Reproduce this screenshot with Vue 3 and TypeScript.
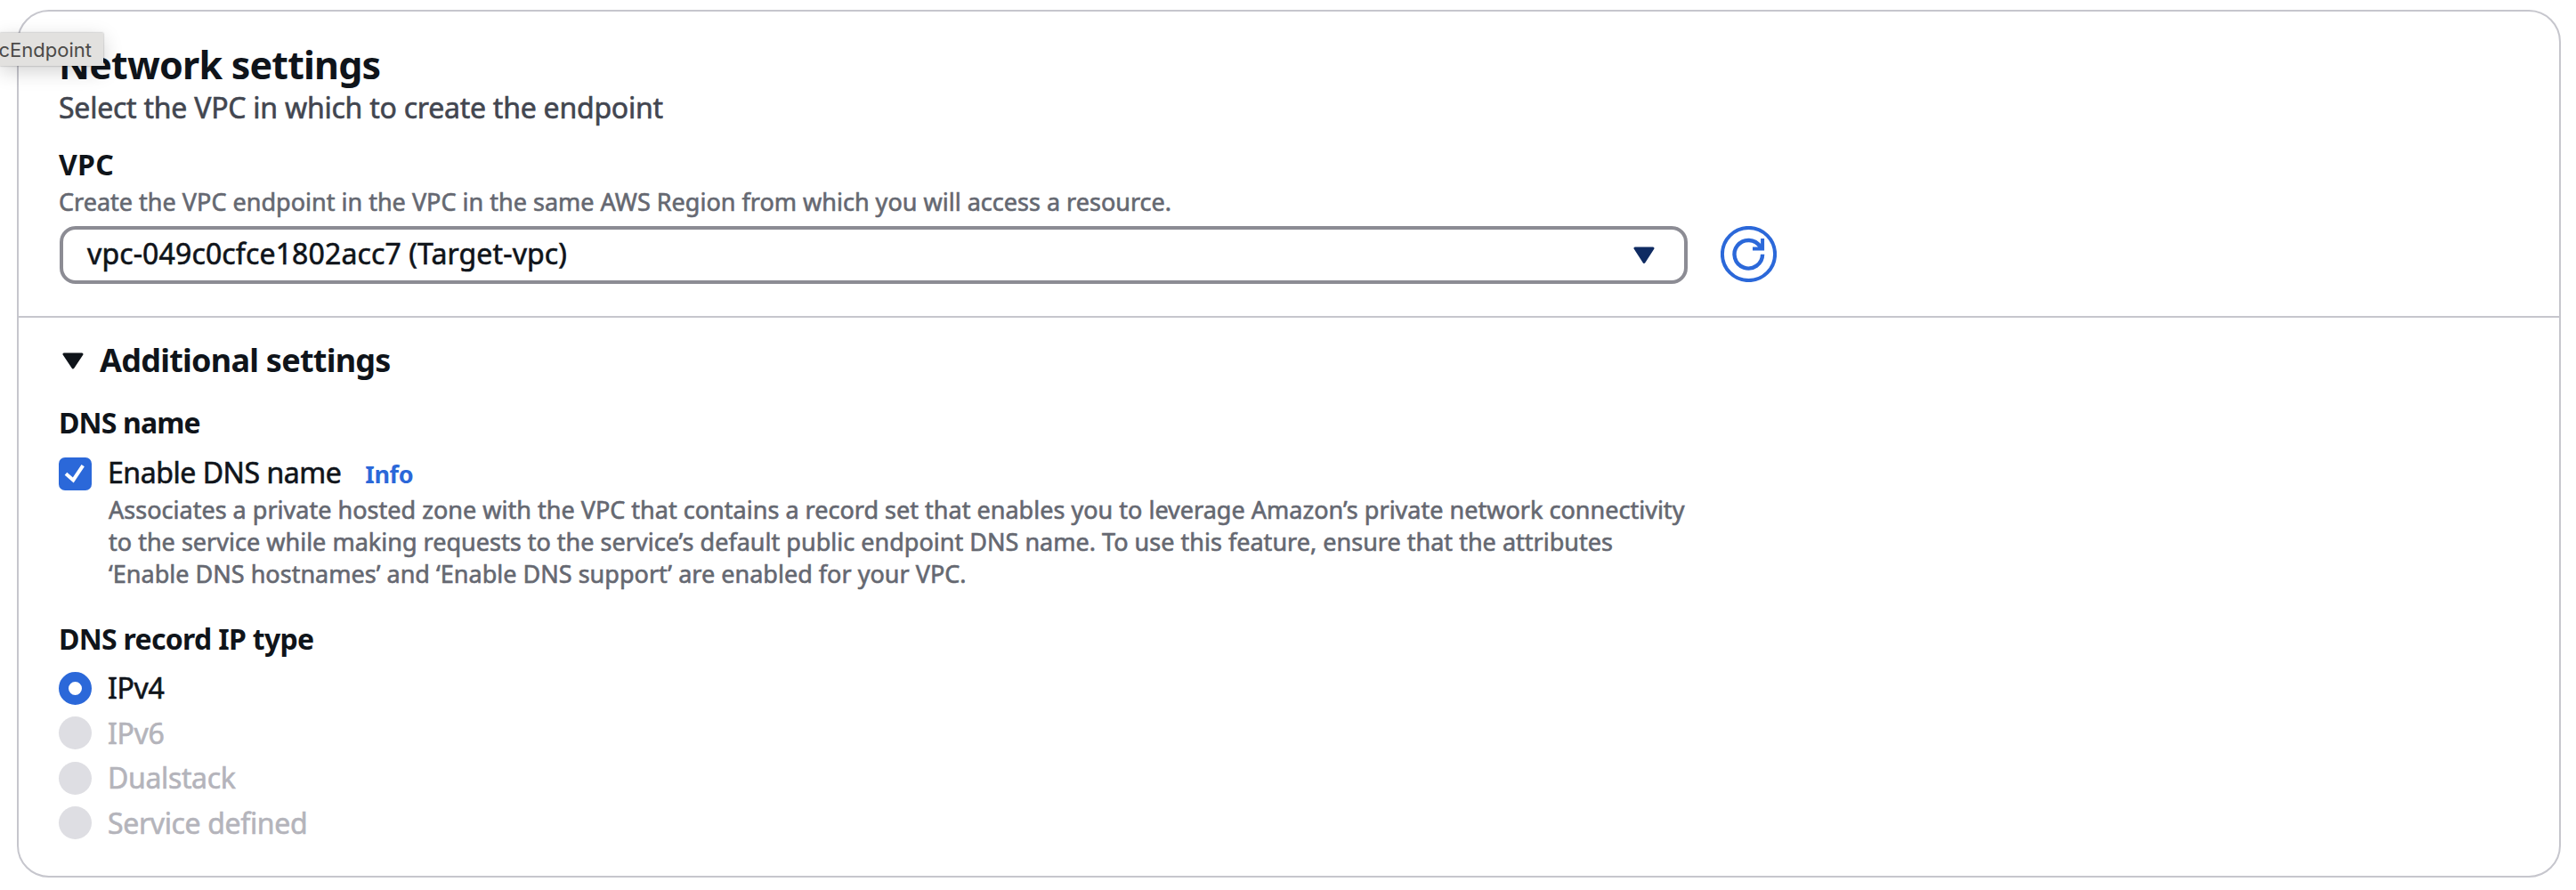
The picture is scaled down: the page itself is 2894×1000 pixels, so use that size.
<script setup lang="ts">
import { ref } from 'vue'

interface IpType {
  id: string
  label: string
  disabled: boolean
}

const vpc = ref('vpc-049c0cfce1802acc7 (Target-vpc)')
const enableDns = ref(true)
const selectedType = ref('ipv4')

const ipTypes: IpType[] = [
  { id: 'ipv4', label: 'IPv4', disabled: false },
  { id: 'ipv6', label: 'IPv6', disabled: true },
  { id: 'dualstack', label: 'Dualstack', disabled: true },
  { id: 'service', label: 'Service defined', disabled: true },
]

const dnsDescription: string[] = [
  'Associates a private hosted zone with the VPC that contains a record set that enables you to leverage Amazon’s private network connectivity',
  'to the service while making requests to the service’s default public endpoint DNS name. To use this feature, ensure that the attributes',
  '‘Enable DNS hostnames’ and ‘Enable DNS support’ are enabled for your VPC.',
]
</script>

<template>
  <main class="page">
    <section class="panel">
      <div class="network">
        <h2 class="title">Network settings</h2>
        <p class="subtitle">Select the VPC in which to create the endpoint</p>
        <h4 class="label vpc-label">VPC</h4>
        <p class="hint">Create the VPC endpoint in the VPC in the same AWS Region from which you will access a resource.</p>
        <div class="select-row">
          <div class="select" role="combobox">
            <span class="select-value">{{ vpc }}</span>
            <svg class="select-caret" width="24" height="20" viewBox="0 0 24 20">
              <path d="M2 2H22L12 17.5Z" fill="#0f2b62" stroke="#0f2b62" stroke-width="3" stroke-linejoin="round" />
            </svg>
          </div>
          <button class="refresh" type="button" aria-label="Refresh">
            <svg width="63" height="63" viewBox="0 0 63 63" fill="none" stroke="#2b68d9">
              <circle cx="31.5" cy="31.5" r="29.6" stroke-width="4" />
              <path d="M47.1 31.8A15.8 15.8 0 1 1 44.6 23.2L46 25.4" stroke-width="4.4" />
              <path d="M47.1 14V25.5H36" stroke-width="4" />
            </svg>
          </button>
        </div>
      </div>

      <div class="additional">
        <div class="expander">
          <svg width="24" height="20" viewBox="0 0 24 20">
            <path d="M2 2H22L12 17Z" fill="#0f141a" stroke="#0f141a" stroke-width="3" stroke-linejoin="round" />
          </svg>
          <h3 class="expander-title">Additional settings</h3>
        </div>

        <h4 class="label dns-label">DNS name</h4>
        <div class="check-row">
          <span class="checkbox" role="checkbox" :aria-checked="enableDns">
            <svg v-if="enableDns" width="37" height="37" viewBox="0 0 37 37" fill="none">
              <path d="M8 18.2L16.3 25.4L27.2 9.2" stroke="#fff" stroke-width="4" />
            </svg>
          </span>
          <span class="check-text">Enable DNS name</span>
          <a class="info">Info</a>
        </div>
        <div class="dns-hint">
          <p v-for="line in dnsDescription" :key="line">{{ line }}</p>
        </div>

        <h4 class="label type-label">DNS record IP type</h4>
        <div class="radios" role="radiogroup">
          <div v-for="t in ipTypes" :key="t.id" class="radio-row" :class="{ disabled: t.disabled }">
            <span class="radio" :class="{ selected: t.id === selectedType }"></span>
            <span class="radio-text">{{ t.label }}</span>
          </div>
        </div>
      </div>
    </section>

    <div class="tooltip">cEndpoint</div>
  </main>
</template>

<style>
body {
  background: #fff;
  overflow: hidden;
}
</style>

<style scoped>
.page {
  position: relative;
  box-sizing: border-box;
  width: 2894px;
  height: 1000px;
  padding: 11px 17px 0 19px;
  overflow: hidden;
  background: #fff;
  color: #0f141a;
  font-family: 'Noto Sans', 'Open Sans', sans-serif;
  font-size: 32px;
  line-height: 40px;
  white-space: nowrap;
}

h2,
h3,
h4,
p {
  margin: 0;
}

.panel {
  box-sizing: border-box;
  height: 975px;
  border: 2px solid #c6c6cd;
  border-radius: 36px;
}

.network {
  padding: 33px 45px 36px;
  border-bottom: 2px solid #c6c6cd;
}

.title {
  font-size: 43px;
  line-height: 54px;
  letter-spacing: -0.8px;
}

.subtitle {
  margin-top: 1px;
  color: #424650;
  letter-spacing: -0.24px;
  -webkit-text-stroke: 0.6px currentColor;
}

.label {
  font-size: 32px;
  line-height: 40px;
  font-weight: 700;
  letter-spacing: -0.7px;
}

.vpc-label {
  margin-top: 24px;
  letter-spacing: 0.3px;
}

.hint {
  margin-top: 4px;
  color: #656871;
  font-size: 27px;
  line-height: 36px;
  letter-spacing: 0.01px;
  -webkit-text-stroke: 0.6px currentColor;
}

.select-row {
  display: flex;
  align-items: flex-start;
  gap: 37px;
  margin-top: 9px;
}

.select {
  display: flex;
  align-items: center;
  justify-content: space-between;
  box-sizing: border-box;
  width: 1829px;
  height: 65px;
  margin-left: 1px;
  padding: 0 33px 0 27px;
  border: 4px solid #8c8c94;
  border-radius: 18px;
}

.select-value {
  margin-top: -3px;
  letter-spacing: 0.13px;
  -webkit-text-stroke: 0.6px currentColor;
}

.refresh {
  width: 63px;
  height: 63px;
  padding: 0;
  border: 0;
  background: none;
}

.refresh svg {
  display: block;
}

.additional {
  padding: 24px 45px 0;
}

.expander {
  display: flex;
  align-items: center;
  gap: 18px;
  padding-left: 4px;
}

.expander svg {
  margin-top: 2px;
}

.expander-title {
  font-size: 36px;
  line-height: 48px;
  letter-spacing: -0.75px;
}

.dns-label {
  margin-top: 26px;
  letter-spacing: -0.85px;
}

.check-row {
  display: flex;
  align-items: center;
  margin-top: 16px;
}

.checkbox {
  width: 37px;
  height: 37px;
  margin-top: 2px;
  border-radius: 7px;
  background: #2b68d9;
}

.checkbox svg {
  display: block;
}

.check-text {
  margin-left: 18px;
  letter-spacing: -0.45px;
  -webkit-text-stroke: 0.6px currentColor;
}

.info {
  margin: 4px 0 0 27px;
  line-height: 36px;
  color: #2b68d9;
  font-size: 27px;
  font-weight: 700;
  letter-spacing: -0.4px;
}

.dns-hint {
  margin: 4px 0 0 56px;
  color: #656871;
  font-size: 27px;
  line-height: 36px;
  letter-spacing: 0.015px;
  -webkit-text-stroke: 0.6px currentColor;
}

.type-label {
  margin-top: 35px;
}

.radios {
  display: flex;
  flex-direction: column;
  gap: 10.6px;
  margin-top: 15px;
}

.radio-row {
  display: flex;
  align-items: center;
  gap: 18px;
}

.radio {
  box-sizing: border-box;
  width: 37px;
  height: 37px;
  border-radius: 50%;
  background: #dedee3;
}

.radio.selected {
  border: 11px solid #2b68d9;
  background: #fff;
}

.radio-text {
  letter-spacing: -0.35px;
  -webkit-text-stroke: 0.6px currentColor;
}

.disabled .radio-text {
  color: #b4b4bb;
}

.tooltip {
  position: absolute;
  top: 37px;
  left: 0;
  display: flex;
  justify-content: flex-end;
  box-sizing: border-box;
  width: 116px;
  height: 37px;
  padding-right: 13px;
  background: #e2e1df;
  box-shadow: 0 0 2px rgba(0, 0, 0, 0.35), 0 6px 22px rgba(0, 0, 0, 0.18);
  color: #4b4a48;
  font-family: Inter, Roboto, sans-serif;
  font-size: 22px;
  line-height: 38px;
}
</style>
